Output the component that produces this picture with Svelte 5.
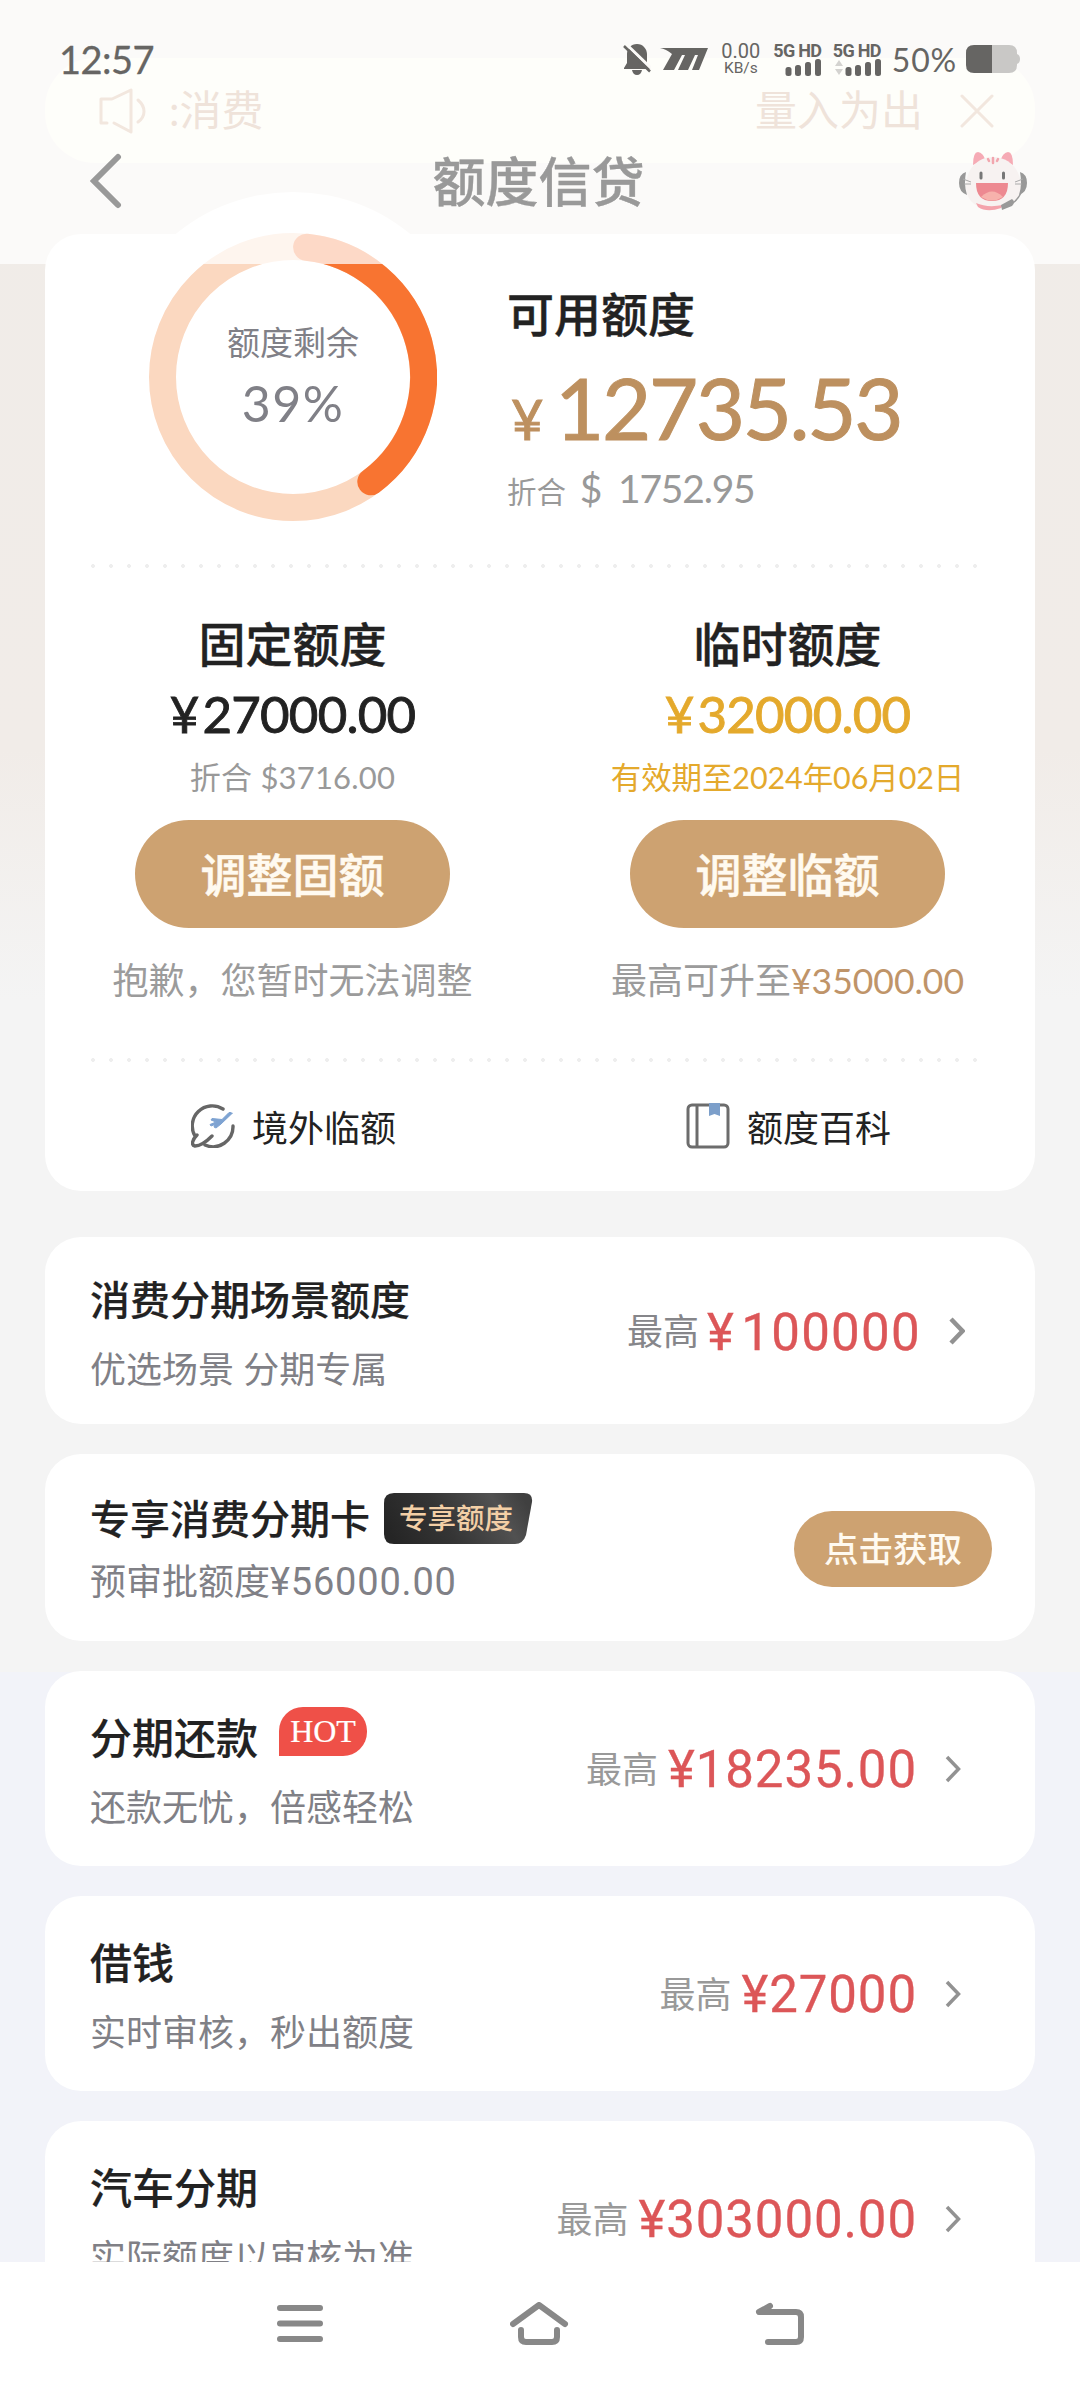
<script>
  // Ring geometry
  const ringRadius = 130.5;
  const ringCenter = 144;

  const point = (deg) => {
    const rad = (deg - 90) * Math.PI / 180;
    return (ringCenter + ringRadius * Math.cos(rad)).toFixed(1) + ' ' + (ringCenter + ringRadius * Math.sin(rad)).toFixed(1);
  }

  const percent = 39;
  const arc = `M${point(6)} A${ringRadius} ${ringRadius} 0 0 1 ${point(percent * 3.6 + 3)}`;

  const quotas = [
    {
      kind: 'fixed',
      title: '固定额度',
      amount: '27000.00',
      note: '折合 $3716.00',
      button: '调整固额',
      hint: '抱歉，您暂时无法调整',
      max: ''
    },
    {
      kind: 'temp',
      title: '临时额度',
      amount: '32000.00',
      note: '有效期至2024年06月02日',
      button: '调整临额',
      hint: '最高可升至',
      max: '¥35000.00'
    }
  ];

  const products = [
    { style: 'scene', title: '消费分期场景额度', sub: '优选场景 分期专属', amount: '100000' },
    { style: 'card', title: '专享消费分期卡', tag: '专享额度', sub: '预审批额度', subAmount: '¥56000.00', button: '点击获取' },
    { style: 'loan', title: '分期还款', hot: true, sub: '还款无忧，倍感轻松', amount: '18235.00' },
    { style: 'loan', title: '借钱', sub: '实时审核，秒出额度', amount: '27000' },
    { style: 'loan', title: '汽车分期', sub: '实际额度以审核为准', amount: '303000.00' }
  ];
</script>

<div class="screen">
  <main>
    <div class="notice">
      <svg class="speaker" width="48" height="46" viewBox="0 0 48 46">
        <path d="M8 35H2V11H13L32 2V44L15 35" />
        <path d="M39 12C47 19 47 28 39 34" />
      </svg>
      <span class="notice-left"><i>:</i>消费</span>
      <span class="notice-right">量入为出</span>
      <svg class="close" width="34" height="34" viewBox="0 0 34 34"><path d="M2 2L32 32M32 2L2 32" /></svg>
    </div>

    <section class="panel">
      <div class="overview">
        <div class="ring">
          <svg width="288" height="288" viewBox="0 0 288 288">
            <circle cx="144" cy="144" r="130.5" fill="none" stroke="#fbd8c0" stroke-width="27" />
            <path d={arc} fill="none" stroke="#f87431" stroke-width="27" stroke-linecap="round" />
          </svg>
          <div class="ring-text">
            <span>额度剩余</span>
            <b>{percent}%</b>
          </div>
        </div>
        <div class="available">
          <h2>可用额度</h2>
          <p class="big"><span>¥</span>12735.53</p>
          <p class="usd"><span>折合</span> <i>$</i> 1752.95</p>
        </div>
      </div>

      <div class="dots"></div>

      <div class="quotas">
        {#each quotas as quota}
          <div class="quota {quota.kind}">
            <h2>{quota.title}</h2>
            <p class="amount"><span>¥</span>{quota.amount}</p>
            <p class="note">{quota.note}</p>
            <button>{quota.button}</button>
            <p class="hint">{quota.hint}<em>{quota.max}</em></p>
          </div>
        {/each}
      </div>

      <div class="dots"></div>

      <div class="links">
        <div class="link">
          <svg width="44" height="44" viewBox="0 0 44 44" fill="none" stroke="#666" stroke-width="3.4" stroke-linecap="round">
            <path d="M32 5A20 20 0 0 0 4 32" />
            <path d="M42 22A20 20 0 0 1 14 41" />
            <path d="M6 31C1 36 0 41 4 42C9 42 16 37 21 32" />
            <path d="M41 9.500L30 20L25 24L23 23L24 20.500L20 22L19 20.500L25 18L20 16L21 14.500L31 15.500L38 8.500Q41 8 41 9.500Z" fill="#7ea3d2" stroke="#7ea3d2" stroke-width="1" stroke-linejoin="round" />
          </svg>
          <span>境外临额</span>
        </div>
        <div class="link">
          <svg width="44" height="46" viewBox="0 0 44 46" fill="none" stroke="#6c6c6c" stroke-width="3">
            <rect x="2" y="2" width="40" height="42" rx="4" />
            <path d="M11 2V44" />
            <path d="M23 0H34V13L28.500 11L23 13Z" fill="#7c9fca" stroke="none" />
          </svg>
          <span>额度百科</span>
        </div>
      </div>
    </section>

    {#each products as product}
      <section class="product {product.style}">
        <div class="info">
          <h3>
            {product.title}
            {#if product.tag}
              <span class="tag">
                <svg width="149" height="51" viewBox="0 0 149 51">
                  <defs>
                    <linearGradient id="tagFill" x1="0" y1="0.600" x2="1" y2="0.400">
                      <stop offset="0" stop-color="#252525" />
                      <stop offset="0.400" stop-color="#353535" />
                      <stop offset="0.800" stop-color="#515151" />
                      <stop offset="1" stop-color="#404040" />
                    </linearGradient>
                  </defs>
                  <path d="M10 0H140Q149 0 148 9L142 42Q139 51 131 51H10Q0 51 0 41V10Q0 0 10 0Z" fill="url(#tagFill)" />
                </svg>
                <b>{product.tag}</b>
              </span>
            {/if}
            {#if product.hot}
              <span class="hot">HOT</span>
            {/if}
          </h3>
          <p class="sub">{product.sub}<span>{product.subAmount || ''}</span></p>
        </div>
        {#if product.button}
          <button class="get">{product.button}</button>
        {:else}
          <div class="limit">
            <span class="most">最高</span>
            <span class="money"><i>¥</i>{product.amount}</span>
            <svg width="16" height="28" viewBox="0 0 16 28"><path d="M2 2L13.500 14L2 26" /></svg>
          </div>
        {/if}
      </section>
    {/each}
  </main>

  <header>
    <div class="status">
      <span class="time">12:57</span>
      <svg class="bell" width="28" height="31" viewBox="0 0 28 31">
        <path d="M14 0C20 0 24 5 24 10V19L27 24V25H1V24L4 19V10C4 5 8 0 14 0Z" fill="#666563" />
        <path d="M9 26H19Q18 31 14 31Q10 31 9 26Z" fill="#666563" />
        <path d="M3 0L30 26" stroke="#fbfaf8" stroke-width="3" />
        <path d="M1 2L27 27.500" stroke="#666563" stroke-width="2.500" />
      </svg>
      <svg class="logo" width="48" height="23" viewBox="0 0 48 23" fill="#666563">
        <path d="M0 0H48L39 22H32L38 7H35L28 22H18L25 7H22L14 22H3L12 6Q6 1 0 0Z" />
      </svg>
      <span class="speed"><b>0.00</b><b>KB/s</b></span>
      {#each [false, true] as arrows}
        <span class="signal">
          <b>5G HD</b>
          <svg width="48" height="17" viewBox="0 0 48 17" fill="#666563">
            {#if arrows}
              <path d="M2 7L6 1L10 7ZM2 10L6 16L10 10Z" fill="#d4d3d0" />
            {/if}
            <rect x="12.500" y="8" width="6" height="9" rx="2.500" />
            <rect x="22" y="6" width="6" height="11" rx="2.500" />
            <rect x="32" y="3" width="6" height="14" rx="2.500" />
            <rect x="42" y="0" width="6" height="17" rx="2.500" />
          </svg>
        </span>
      {/each}
      <span class="charge">50%</span>
      <svg class="battery" width="54" height="28" viewBox="0 0 54 28">
        <path d="M26 0H43Q51 0 51 8V9Q54 10 54 14Q54 18 51 19V20Q51 28 43 28H26Z" fill="#c9c8c6" />
        <path d="M26 0H8Q0 0 0 8V20Q0 28 8 28H26Z" fill="#666563" />
      </svg>
    </div>
    <div class="bar">
      <svg class="back" width="32" height="56" viewBox="0 0 32 56"><path d="M28 4L4 28L28 52" /></svg>
      <h1>额度信贷</h1>
      <svg class="mascot" width="68" height="62" viewBox="0 0 68 62">
        <path d="M14 15Q14 2 19 2Q24 3 26 9ZM54 15Q54 2 49 2Q44 3 42 9Z" fill="#f6abb5" />
        <path d="M34 7C50 7 62 20 62 36C62 50 52 59 34 59C16 59 7 50 7 36C7 20 18 7 34 7Z" fill="#f7f2f1" />
        <path d="M17 53Q28 58 44 55L42 58Q28 63 19 57Z" fill="#f4a3ac" />
        <path d="M7 22Q0 24 0 33Q0 42 8 45Q6 38 6 33Q6 27 7 22ZM61 22Q68 24 68 33Q68 42 60 45Q62 38 62 33Q62 27 61 22Z" fill="#989898" />
        <path d="M62 43Q58 51 52 54" fill="none" stroke="#999" stroke-width="1.500" />
        <path d="M42 55L53 49Q57 52 53 56L43 60Z" fill="#999" />
        <path d="M34 8V13M29 9L30 11M39 9L38 11" stroke="#f2a6ae" stroke-width="2.500" stroke-linecap="round" />
        <path d="M22 23V28M44.500 23V28" stroke="#777" stroke-width="3" stroke-linecap="round" />
        <path d="M4 29L12 32M5 34L12 34M64 29L56 32M63 34L56 34" stroke="#aaa" />
        <path d="M17 33H49Q49 51 33 51Q17 51 17 33Z" fill="#ed8991" />
        <path d="M22 47Q33 36 44 47Q33 54 22 47Z" fill="#f7b2ac" />
      </svg>
    </div>
  </header>

  <nav>
    <svg width="48" height="44" viewBox="0 0 48 44"><path d="M4 6H44M4 21.500H44M4 37H44" /></svg>
    <svg width="60" height="44" viewBox="0 0 60 44"><path d="M3 22L29 3L55 22M11 28V35Q11 40 16 40H42Q47 40 47 35V28" /></svg>
    <svg width="50" height="44" viewBox="0 0 50 44"><path d="M15 4L4 10H41Q46 10 46 15V35Q46 40 41 40H13" /></svg>
  </nav>
</div>

<style>
  :global(body) {
    margin: 0;
    background: #fff;
  }
  h1, h2, h3, p {
    margin: 0;
    font-weight: 500;
  }
  p {
    font-weight: 400;
  }
  b, i, em {
    font-weight: inherit;
    font-style: normal;
  }
  svg {
    display: block;
    flex: none;
  }
  button {
    border: none;
    padding: 0 0 4px;
    font-family: inherit;
    font-weight: 500;
    color: #fffaf0;
    background: #cda271;
  }
  .screen {
    position: relative;
    width: 1080px;
    height: 2388px;
    overflow: hidden;
    font-family: Lato, "Noto Sans CJK SC", sans-serif;
    color: #222;
  }
  main {
    box-sizing: border-box;
    height: 2262px;
    padding: 58px 45px 0;
    overflow: hidden;
    background: linear-gradient(#f0ece8 0, #f1ece8 750px, #f4f4f4 1000px, #f4f4f4 1672px, #f2f3f9 1672px);
  }

  /* notice under the header */
  .notice {
    box-sizing: border-box;
    display: flex;
    align-items: center;
    height: 105px;
    padding: 0 41px 0 54px;
    border-radius: 50px;
    background: #fcf9ed;
    color: #c49776;
    font-size: 42px;
    line-height: 60px;
  }
  .notice svg {
    fill: none;
    stroke: #cda585;
    stroke-width: 3;
    stroke-linecap: round;
    stroke-linejoin: round;
  }
  .notice-left {
    flex: 1;
    margin: -2px 0 0 22px;
  }
  .notice-right {
    margin: -2px 37px 0 0;
  }

  /* main panel */
  .panel {
    box-sizing: border-box;
    height: 957px;
    margin-top: 71px;
    margin-bottom: 46px;
    border-radius: 36px;
    background: #fff;
  }
  .overview {
    display: flex;
    height: 330px;
  }
  .ring {
    position: relative;
    width: 288px;
    height: 288px;
    margin: -1px 70px 0 104px;
  }
  .ring::before {
    content: "";
    position: absolute;
    left: -41px;
    top: -41px;
    width: 370px;
    height: 370px;
    border-radius: 50%;
    background: #fff;
  }
  .ring svg {
    position: relative;
  }
  .ring-text {
    position: absolute;
    inset: 0;
    display: flex;
    flex-direction: column;
    align-items: center;
    color: #808087;
  }
  .ring-text span {
    margin-top: 89px;
    font-size: 33px;
    line-height: 40px;
  }
  .ring-text b {
    margin-top: 15px;
    font-size: 50px;
    line-height: 52px;
    letter-spacing: 1.5px;
  }
  .available {
    padding-top: 50px;
  }
  h2 {
    font-size: 47px;
    line-height: 60px;
    -webkit-text-stroke: 0.4px;
  }
  .big {
    margin: 18px 0 0 4px;
    font-size: 85px;
    line-height: 90px;
    letter-spacing: -2.4px;
    color: #bd905f;
    -webkit-text-stroke: 1px;
  }
  .big span {
    margin-right: 14px;
    font-size: 56px;
  }
  .usd {
    margin-top: 2px;
    font-size: 39px;
    line-height: 44px;
    letter-spacing: -1.2px;
    color: #999;
  }
  .usd span {
    margin-right: 5px;
    font-size: 29.5px;
    letter-spacing: 0;
  }
  .usd i {
    margin-right: 8px;
  }
  .dots {
    height: 4px;
    margin: 0 55px 0 46px;
    background: radial-gradient(circle at 2px 2px, #eee 1.7px, transparent 2.2px) 0 0 / 18px 4px repeat-x;
  }
  .quotas {
    display: flex;
    height: 490px;
  }
  .quota {
    flex: 1;
    display: flex;
    flex-direction: column;
    align-items: center;
    padding-top: 46px;
  }
  .amount {
    margin-top: 10px;
    font-size: 51px;
    line-height: 60px;
    letter-spacing: -0.8px;
    -webkit-text-stroke: 0.9px;
  }
  .amount span {
    margin-right: 4px;
  }
  .note {
    margin-top: 13px;
    font-size: 31px;
    line-height: 40px;
    letter-spacing: 0.2px;
    color: #999;
  }
  .quota button {
    width: 315px;
    height: 108px;
    margin-top: 23px;
    border-radius: 54px;
    font-size: 46px;
    -webkit-text-stroke: 0.5px;
  }
  .hint {
    margin-top: 27px;
    font-size: 36px;
    line-height: 50px;
    color: #9b9b9b;
  }
  .hint em {
    font-size: 35.5px;
    color: #bf9469;
  }
  .temp .amount,
  .temp .note {
    color: #e4a92c;
  }
  .temp .note {
    font-size: 30.5px;
    letter-spacing: -0.1px;
  }
  .links {
    display: flex;
    height: 128px;
  }
  .link {
    flex: 1;
    display: flex;
    justify-content: center;
    align-items: center;
    gap: 17px;
    padding-left: 2px;
    font-size: 36px;
  }

  /* product list */
  .product {
    box-sizing: border-box;
    display: flex;
    justify-content: space-between;
    height: 195px;
    margin-bottom: 30px;
    padding: 0 74px 0 45px;
    border-radius: 36px;
    background: #fff;
  }
  .product h3 {
    display: flex;
    align-items: center;
    height: 60px;
    margin-top: 34px;
    font-size: 42px;
    -webkit-text-stroke: 0.2px;
  }
  .sub {
    margin-top: 17px;
    font-size: 36px;
    line-height: 50px;
    color: #808086;
  }
  .scene, .card {
    height: 187px;
  }
  .scene {
    padding-right: 70px;
  }
  .product.scene h3 {
    margin-top: 31px;
    font-size: 40px;
  }
  .scene .sub {
    margin-top: 16px;
  }
  .card {
    padding-right: 43px;
  }
  .product.card h3 {
    margin-top: 33px;
    font-size: 40px;
  }
  .card .sub {
    margin-top: 9px;
  }
  .card .sub span {
    font-family: Roboto, sans-serif;
    font-size: 38px;
    letter-spacing: 0.8px;
  }
  .tag {
    position: relative;
    margin: 2px 0 0 14px;
    -webkit-text-stroke: 0;
  }
  .tag b {
    position: absolute;
    left: 15px;
    top: 0;
    font-size: 28.5px;
    line-height: 50px;
    white-space: nowrap;
    color: #f3cfa6;
  }
  .hot {
    width: 88px;
    height: 49px;
    margin: -8px 0 0 21px;
    border-radius: 24px 24px 24px 0;
    background: #ef5048;
    color: #fff;
    font-family: "Liberation Serif", serif;
    font-size: 32px;
    font-weight: 400;
    line-height: 49px;
    text-align: center;
  }
  .get {
    width: 198px;
    height: 76px;
    margin-top: 57px;
    border-radius: 38px;
    font-size: 34.5px;
  }
  .limit {
    display: flex;
    align-items: center;
    height: 196px;
  }
  .scene .limit {
    height: 188px;
  }
  .most {
    margin: -5px 10px 0 0;
    font-size: 36px;
    color: #999;
  }
  .money {
    margin-right: 28px;
    font-family: Roboto, sans-serif;
    font-size: 51px;
    letter-spacing: 0.9px;
    color: #dc5658;
    -webkit-text-stroke: 0.3px;
  }
  .scene .most {
    color: #86868a;
    margin-right: 8px;
  }
  .scene .money {
    padding-top: 2px;
    letter-spacing: 1.3px;
  }
  .scene .money i {
    margin-right: 6px;
  }
  .limit path {
    fill: none;
    stroke: #929292;
    stroke-width: 3.5;
  }
  .scene .limit path {
    stroke-width: 4.5;
  }

  /* translucent header over the scrolled page */
  header {
    position: absolute;
    left: 0;
    top: 0;
    width: 1080px;
    height: 264px;
    background: rgba(255, 255, 255, 0.73);
  }
  .status {
    box-sizing: border-box;
    display: flex;
    align-items: center;
    height: 118px;
    padding: 0 60px 0 59px;
    color: #666563;
  }
  .time {
    flex: 1;
    font-size: 38px;
    letter-spacing: -0.5px;
    -webkit-text-stroke: 0.3px;
  }
  .logo {
    margin-left: 9px;
  }
  .speed {
    display: flex;
    flex-direction: column;
    align-items: center;
    width: 42px;
    margin-left: 12px;
    font-family: Roboto, sans-serif;
    font-size: 20px;
    line-height: 18px;
  }
  .speed b:last-child {
    font-size: 15.5px;
    line-height: 16px;
  }
  .signal {
    margin-left: 11.5px;
    font-family: Roboto, sans-serif;
    font-size: 18px;
    font-weight: 700;
    line-height: 17px;
    white-space: nowrap;
    letter-spacing: -0.7px;
  }
  .charge {
    margin: 0 9px 0 11px;
    font-size: 32px;
    letter-spacing: 0.8px;
  }
  .bar {
    box-sizing: border-box;
    display: flex;
    align-items: center;
    justify-content: space-between;
    height: 126px;
    padding: 0 53px 0 90px;
  }
  .back path {
    fill: none;
    stroke: #999;
    stroke-width: 6;
    stroke-linecap: round;
  }
  h1 {
    margin: -4px 4px 0 0;
    font-size: 53px;
    color: #999;
    -webkit-text-stroke: 0.4px;
  }

  nav {
    box-sizing: border-box;
    display: flex;
    justify-content: space-between;
    height: 126px;
    padding: 38px 275px 0 276px;
    background: #fff;
  }
  nav svg {
    margin-top: 2px;
  }
  nav path {
    fill: none;
    stroke: #888;
    stroke-width: 6;
    stroke-linecap: round;
    stroke-linejoin: round;
  }
</style>
